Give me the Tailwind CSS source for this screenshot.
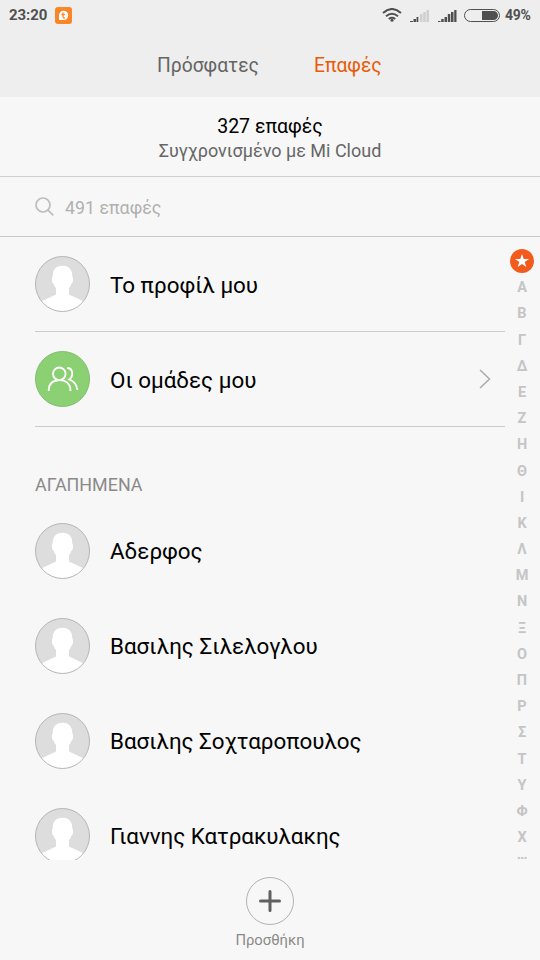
<!DOCTYPE html>
<html lang="el">
<head>
<meta charset="utf-8">
<title>Επαφές</title>
<script src="https://cdn.jsdelivr.net/npm/@tailwindcss/browser@4"></script>
</head>
<body class="bg-[#f7f7f7] font-['Roboto',sans-serif] text-black">
<svg class="hidden">
  <symbol id="avatar" viewBox="0 0 56 56">
    <ellipse cx="27.500" cy="28" rx="27" ry="27.500" fill="#ddd"/>
    <path fill="#fff" d="M27.500 9.800C20.500 9.800 17.700 14 17.700 20.500C16.300 21.500 16.800 27.500 18.800 28C19.300 30 20 31.200 21 32V38.500L6 45.500C11.500 52 19 55.500 27.500 55.500S43.500 52 49 45.500L34 38.500V32C35 31.200 35.700 30 36.200 28C38.200 27.500 38.700 21.500 37.300 20.500C37.300 14 34.500 9.800 27.500 9.800Z"/>
    <ellipse cx="27.500" cy="28" rx="27" ry="27.500" fill="none" stroke="#b5b5b5"/>
  </symbol>
</svg>
<div class="relative flex h-[960px] w-[540px] flex-col overflow-hidden">
  <header class="h-[97px] shrink-0 bg-[#eee]">
    <div class="flex h-[30px] items-center pl-[9px] pr-[10px] text-[#505050]">
      <span class="w-[46px] text-[15px] font-bold leading-[30px] tracking-[-0.1px]">23:20</span>
      <svg class="h-[17px] w-[17px]" viewBox="0 0 17 17"><rect width="17" height="17" rx="3" fill="#f98628"/><path d="M4 13V8.500A4.600 4.600 0 1 1 8.600 13z" fill="#fff"/><path d="M8 5.500v4.200q0 1.200 1.200 1.200h.8M6.500 7.500h3.500" fill="none" stroke="#f98628" stroke-width="1.300"/></svg>
      <svg class="ml-auto h-[14px] w-[20px]" viewBox="0 0 20 14" fill="none" stroke="#505050" stroke-width="2"><path d="M1 5Q10-3 19 5M4 8.200q6-5 12 0M6.800 11q3.200-2.500 6.400 0"/><circle cx="10" cy="12.300" r="1.500" fill="#505050" stroke="none"/></svg>
      <svg class="ml-[8px] h-[13px] w-[20px]" viewBox="0 0 20 13"><path fill="#505050" d="M0 12h3v1H0zM3.500 10H6v3H3.500zM6.500 8h2v5h-2z"/><path fill="#cfcfcf" d="M8.500 7H9v6h-.5zM10 5h2.500v8H10zM13.200 3h2.500v10h-2.500zM16.500 1H19v12h-2.500z"/></svg>
      <svg class="ml-[8px] h-[13px] w-[20px]" viewBox="0 0 20 13"><path fill="#505050" d="M0 12h2.500v1H0zM3.200 10h2.500v3H3.200zM6.500 8H9v5H6.500zM9.800 5h2.500v8H9.800zM13 3h2.500v10H13zM16.200 1h2.300v12h-2.300z"/></svg>
      <svg class="ml-[6px] h-[13px] w-[36px]" viewBox="0 0 36 13"><rect x=".5" y=".5" width="35" height="12" rx="6" fill="none" stroke="#505050"/><path fill="#505050" d="M18 2h11.500a4.500 4.500 0 0 1 0 9H18z"/></svg>
      <span class="ml-[5px] w-[25px] text-[14px] font-bold leading-[30px] tracking-[-0.3px]">49%</span>
    </div>
    <nav class="flex h-[67px] pl-[157px] text-[19.300px] leading-[71px] text-[#646464]">
      <span class="w-[157px]">Πρόσφατες</span>
      <span class="text-[#e95b07]">Επαφές</span>
    </nav>
  </header>
  <section class="flex h-[80px] shrink-0 flex-col items-center border-b border-[#cfcfcf] pt-[17px]">
    <p class="text-[19.500px] leading-[26px]">327 επαφές</p>
    <p class="text-[18px] leading-[22px] text-[#666]">Συγχρονισμένο με Mi Cloud</p>
  </section>
  <section class="flex h-[60px] shrink-0 items-center border-b border-[#c8c8c8] pl-[35px] text-[17.800px] text-[#b0b0b0]">
    <svg class="mr-[11px] h-[19px] w-[19px]" viewBox="0 0 19 19" fill="none" stroke="#bdbdbd" stroke-width="1.700"><circle cx="8" cy="8" r="7"/><path d="m12.800 12.800 5.500 5.500"/></svg>
    <span class="mt-[2px] leading-[22px]">491 επαφές</span>
  </section>
  <main class="flex h-[623px] shrink-0 overflow-hidden">
    <div class="ml-[35px] w-[470px] shrink-0 text-[22.400px]">
      <div class="flex h-[95px] items-center border-b border-[#cbcbcb]">
        <svg class="h-[56px] w-[56px]"><use href="#avatar"/></svg>
        <span class="ml-[19px] mt-[4px]">Το προφίλ μου</span>
      </div>
      <div class="flex h-[95px] items-center border-b border-[#cbcbcb]">
        <svg class="h-[56px] w-[56px]" viewBox="0 0 56 56" fill="none" stroke="#fff" stroke-width="1.800"><ellipse cx="27.500" cy="28" rx="27" ry="27.500" fill="#8bd174" stroke="#82bd70" stroke-width="1"/><circle cx="24.300" cy="22.800" r="6.300"/><path d="M13.700 40c0-7 4-10.800 10.700-10.800S35.500 33 35.500 40M32.200 17c6 0 6.500 8.500 2 11.500C39.500 30.500 42 33.500 42.300 39"/></svg>
        <span class="ml-[19px] mt-[4px]">Οι ομάδες μου</span>
        <svg class="ml-auto mr-[14px] h-[20px] w-[12px]" viewBox="0 0 12 20" fill="none" stroke="#aaa" stroke-width="1.500"><path d="m1 1 9.500 9L1 19"/></svg>
      </div>
      <h2 class="h-[76px] pt-[46px] text-[17.900px] leading-[24px] text-[#8a8a8a]">ΑΓΑΠΗΜΕΝΑ</h2>
      <div class="flex h-[95px] items-center"><svg class="h-[56px] w-[56px]"><use href="#avatar"/></svg><span class="ml-[19px] mt-[2px]">Αδερφος</span></div>
      <div class="flex h-[95px] items-center"><svg class="h-[56px] w-[56px]"><use href="#avatar"/></svg><span class="ml-[19px] mt-[2px]">Βασιλης Σιλελογλου</span></div>
      <div class="flex h-[95px] items-center"><svg class="h-[56px] w-[56px]"><use href="#avatar"/></svg><span class="ml-[19px] mt-[2px] tracking-[-0.05px]">Βασιλης Σοχταροπουλος</span></div>
      <div class="flex h-[95px] items-center"><svg class="h-[56px] w-[56px]"><use href="#avatar"/></svg><span class="ml-[19px] mt-[2px] tracking-[-0.05px]">Γιαννης Κατρακυλακης</span></div>
    </div>
    <div class="ml-[5px] grid h-[623px] w-[24px] shrink-0 auto-rows-[26.19px] content-start justify-items-center pt-[12px] text-[14.500px] font-bold leading-[26px] text-[#c5c5c5]">
      <svg class="h-[24px] w-[24px]" viewBox="0 0 24 24"><circle cx="12" cy="12" r="12" fill="#f25b1c"/><path fill="#fff" d="m12 5 1.700 5h5.300l-4.300 3.100 1.600 5-4.300-3.100-4.300 3.100 1.600-5L5 10h5.300z"/></svg>
      <span>Α</span><span>Β</span><span>Γ</span><span>Δ</span><span>Ε</span><span>Ζ</span><span>Η</span><span>Θ</span><span>Ι</span><span>Κ</span><span>Λ</span><span>Μ</span><span>Ν</span><span>Ξ</span><span>Ο</span><span>Π</span><span>Ρ</span><span>Σ</span><span>Τ</span><span>Υ</span><span>Φ</span><span>Χ</span>
      <span class="leading-[8px]">…</span>
    </div>
  </main>
  <footer class="flex h-[100px] shrink-0 flex-col items-center pt-[17px]">
    <svg class="h-[48px] w-[48px]" viewBox="0 0 48 48" fill="none"><circle cx="24" cy="24" r="23.500" stroke="#b2b2b2"/><path d="M24 14.500v19M14.500 24h19" stroke="#606060" stroke-width="3" stroke-linecap="round"/></svg>
    <span class="mt-[5px] text-[14.800px] leading-[20px] text-[#8a8a8a]">Προσθήκη</span>
  </footer>
</div>
</body>
</html>
